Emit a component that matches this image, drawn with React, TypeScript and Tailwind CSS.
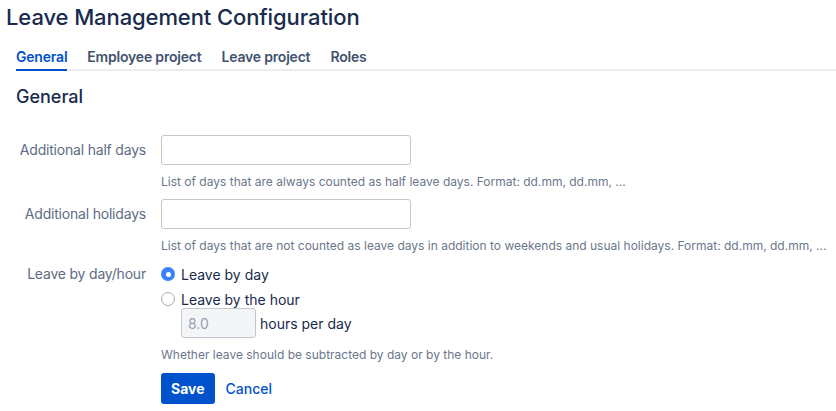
import { useState } from 'react';

const tabs = ['General', 'Employee project', 'Leave project', 'Roles'];

function Field({ label, help }: { label: string; help: string }) {
  return (
    <div className="flex">
      <div className="w-[146px] shrink-0 text-right text-[14px] leading-[30px] tracking-[-0.2px] text-[#5E6C84]">{label}</div>
      <div className="ml-[15px]">
        <input
          type="text"
          className="block h-[30px] w-[250px] rounded-[3px] border border-[#C1C7D0] bg-white px-2 text-[14px] outline-none"
        />
        <p className="mt-[9px] whitespace-nowrap text-[12px] leading-4 text-[#6B778C]">{help}</p>
      </div>
    </div>
  );
}

export default function App() {
  const [active] = useState(0);
  const [mode, setMode] = useState<'day' | 'hour'>('day');

  return (
    <div className="min-h-[411px] w-[836px] overflow-hidden bg-white text-[#172B4D]" style={{ fontFamily: 'Inter, "Noto Sans", sans-serif' }}>
      <h1 className="ml-[6px] pt-[1px] text-[22px] font-medium leading-8 tracking-[-0.1px]">Leave Management Configuration</h1>

      {/* tabs */}
      <div className="ml-4 mt-[14px] flex gap-5 border-b-2 border-[#EBECF0]">
        {tabs.map((t, i) => (
          <div
            key={t}
            className={`-mb-[2px] pb-[2px] text-[14px] font-semibold leading-5 tracking-[-0.2px] ${
              i === active ? 'border-b-2 border-[#0052CC] text-[#0052CC]' : 'border-b-2 border-transparent text-[#42526E]'
            }`}
          >
            {t}
          </div>
        ))}
      </div>

      <h2 className="ml-4 mt-[14px] text-[18px] font-medium leading-6">General</h2>

      <div className="mt-[26px] flex flex-col gap-[9px]">
        <Field label="Additional half days" help="List of days that are always counted as half leave days. Format: dd.mm, dd.mm, ..." />
        <Field
          label="Additional holidays"
          help="List of days that are not counted as leave days in addition to weekends and usual holidays. Format: dd.mm, dd.mm, ..."
        />
      </div>

      <div className="mt-[10px] flex">
        <div className="w-[146px] shrink-0 text-right text-[14px] leading-5 tracking-[-0.2px] text-[#5E6C84]">Leave by day/hour</div>
        <div className="ml-[15px]">
          <label className="flex h-5 items-center gap-[6px] text-[14px] text-[#172B4D]" onClick={() => setMode('day')}>
            <Radio checked={mode === 'day'} />
            Leave by day
          </label>
          <label className="mt-[5px] flex h-5 items-center gap-[6px] text-[14px] text-[#172B4D]" onClick={() => setMode('hour')}>
            <Radio checked={mode === 'hour'} />
            Leave by the hour
          </label>
          <div className="ml-5 -mt-[1px] flex items-center gap-1">
            <input
              type="text"
              defaultValue="8.0"
              disabled
              className="block h-[30px] w-[75px] rounded-[3px] border border-[#C1C7D0] bg-[#F4F5F7] px-[6px] text-[14px] text-[#97A0AF]"
            />
            <span className="text-[14px] text-[#172B4D]">hours per day</span>
          </div>
          <p className="mt-[9px] text-[12px] leading-4 text-[#6B778C]">Whether leave should be subtracted by day or by the hour.</p>
          <div className="mt-[10px] flex items-center gap-[11px]">
            <button className="h-[31px] rounded-[3px] bg-[#0052CC] px-[10px] text-[14px] font-bold text-white">Save</button>
            <button className="text-[14px] font-medium text-[#0052CC]">Cancel</button>
          </div>
        </div>
      </div>
    </div>
  );
}

function Radio({ checked }: { checked: boolean }) {
  return checked ? (
    <span className="flex h-[14px] w-[14px] items-center justify-center rounded-full bg-[#3B82F6]">
      <span className="h-[5px] w-[5px] rounded-full bg-white" />
    </span>
  ) : (
    <span className="h-[14px] w-[14px] rounded-full border border-[#A5ADBA] bg-white" />
  );
}
